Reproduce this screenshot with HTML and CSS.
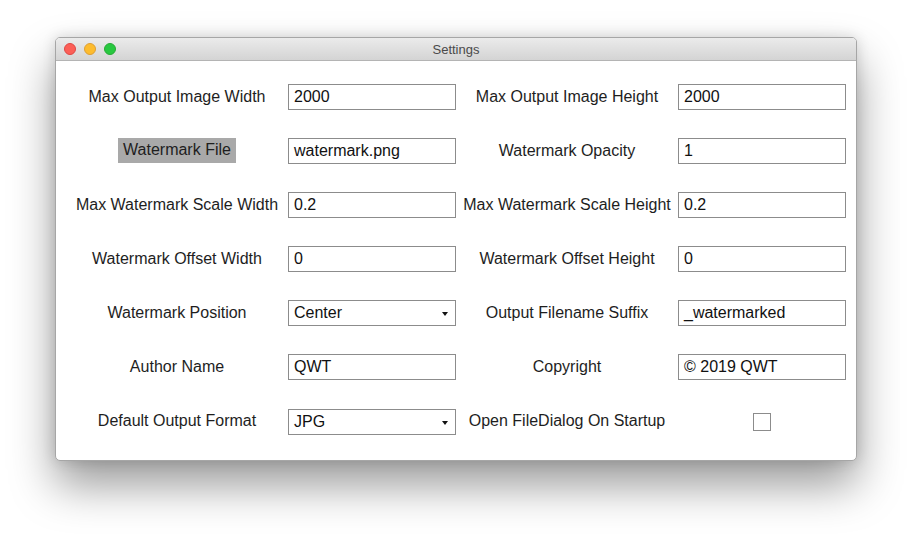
FILE: index.html
```html
<!DOCTYPE html>
<html>
<head>
<meta charset="utf-8">
<link rel="stylesheet" href="styles.css">
</head>
<body>
<div class="window">
  <div class="titlebar">
    <div class="lights">
      <span class="light red"></span>
      <span class="light yellow"></span>
      <span class="light green"></span>
    </div>
    <div class="title">Settings</div>
  </div>
  <div class="form">
    <div class="label">Max Output Image Width</div>
    <div class="field">2000</div>
    <div class="label">Max Output Image Height</div>
    <div class="field">2000</div>

    <div class="label"><span class="hl">Watermark File</span></div>
    <div class="field">watermark.png</div>
    <div class="label">Watermark Opacity</div>
    <div class="field">1</div>

    <div class="label">Max Watermark Scale Width</div>
    <div class="field">0.2</div>
    <div class="label">Max Watermark Scale Height</div>
    <div class="field">0.2</div>

    <div class="label">Watermark Offset Width</div>
    <div class="field">0</div>
    <div class="label">Watermark Offset Height</div>
    <div class="field">0</div>

    <div class="label">Watermark Position</div>
    <div class="field select">Center<span class="arrow"></span></div>
    <div class="label">Output Filename Suffix</div>
    <div class="field">_watermarked</div>

    <div class="label">Author Name</div>
    <div class="field">QWT</div>
    <div class="label">Copyright</div>
    <div class="field">© 2019 QWT</div>

    <div class="label">Default Output Format</div>
    <div class="field select">JPG<span class="arrow"></span></div>
    <div class="label">Open FileDialog On Startup</div>
    <div class="check-cell"><span class="checkbox"></span></div>
  </div>
</div>
</body>
</html>
```
FILE: styles.css
```css
html {
  height: 100%;
  background: #ffffff;
}
body {
  margin: 0;
  min-height: 534px;
  box-sizing: border-box;
  padding: 37px 0 0 55px;
  font-family: "Liberation Sans", Arial, sans-serif;
  background: #ffffff;
}
.window {
  width: 800px;
  height: 422px;
  border: 1px solid #a6a6a6;
  border-radius: 5px;
  background: #ffffff;
  overflow: hidden;
  box-shadow: 0 24px 45px rgba(0, 0, 0, 0.4), 0 0 14px rgba(0, 0, 0, 0.14);
}
.titlebar {
  height: 22px;
  background: linear-gradient(#ebebeb, #d4d4d4);
  border-bottom: 1px solid #b4b4b4;
  display: flex;
  align-items: center;
  position: relative;
}
.lights {
  display: flex;
  gap: 8px;
  padding-left: 8px;
}
.light {
  width: 12px;
  height: 12px;
  border-radius: 50%;
  box-sizing: border-box;
}
.red { background: #fc5f57; border: 1px solid #df4744; }
.yellow { background: #fdbc2e; border: 1px solid #de9f34; }
.green { background: #28c840; border: 1px solid #27aa35; }
.title {
  position: absolute;
  left: 0;
  right: 0;
  text-align: center;
  font-size: 13px;
  color: #4a4a4a;
  pointer-events: none;
}
.form {
  display: grid;
  grid-template-columns: 222px 168px 222px 168px;
  grid-template-rows: repeat(6, 54px) 55px;
  padding: 9px 10px 0 10px;
  align-items: center;
}
.label {
  text-align: center;
  font-size: 16px;
  line-height: 18px;
  color: #1e1e1e;
  padding-bottom: 1px;
}
.hl {
  display: inline-block;
  background: #a9a9a9;
  padding: 3px 5px 4px;
}
.field {
  height: 26px;
  box-sizing: border-box;
  border: 1px solid #8c8c8c;
  padding: 0 5px;
  font-size: 16px;
  line-height: 23px;
  color: #111;
  position: relative;
}
.arrow {
  position: absolute;
  right: 7px;
  top: 11px;
  width: 0;
  height: 0;
  border-left: 3.5px solid transparent;
  border-right: 3.5px solid transparent;
  border-top: 4px solid #111;
}
.check-cell {
  display: flex;
  justify-content: center;
  align-items: center;
}
.checkbox {
  width: 18px;
  height: 18px;
  box-sizing: border-box;
  border: 1px solid #8c8c8c;
  background: #fff;
}
```
